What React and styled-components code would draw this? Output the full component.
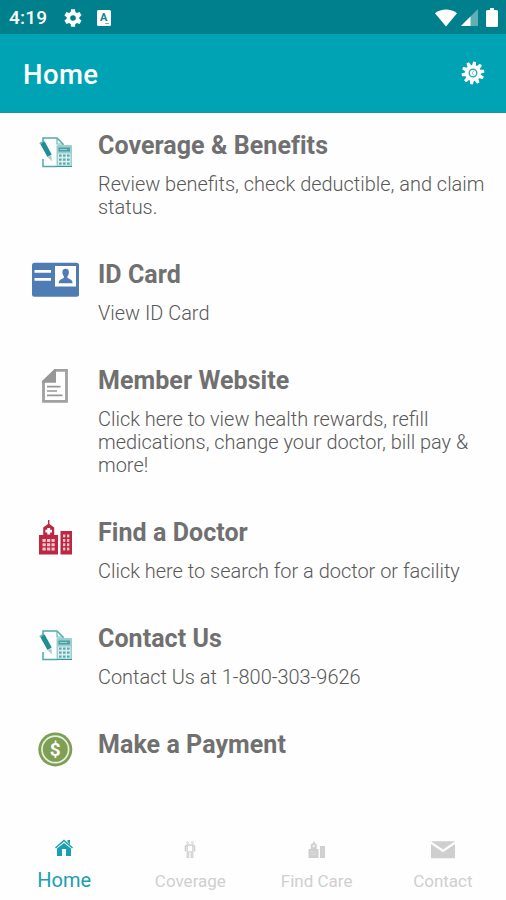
import React from 'react';
import styled, { createGlobalStyle } from 'styled-components';

const GlobalStyle = createGlobalStyle`
  * { box-sizing: border-box; }
  body {
    margin: 0;
    background: #fff;
    font-family: Roboto, "Liberation Sans", sans-serif;
  }
`;

const Screen = styled.div`
  display: flex;
  flex-direction: column;
  height: 900px;
  overflow: hidden;
  background: #fefefe;
`;

const StatusBar = styled.div`
  display: flex;
  align-items: center;
  justify-content: space-between;
  height: 34px;
  padding: 1px 8px 0 9px;
  background: #00808c;
  color: #fff;
`;

const StatusGroup = styled.div`
  display: flex;
  align-items: center;
  gap: ${(p) => p.$gap}px;
`;

const Clock = styled.span`
  font-size: 19px;
  font-weight: 500;
  letter-spacing: 0.2px;
  margin-right: 2px;
`;

const AppBar = styled.header`
  display: flex;
  align-items: center;
  justify-content: space-between;
  height: 79px;
  padding: 0 21px 0 23px;
  background: #00a3b4;
  border-bottom: 1px solid #1796a4;
  color: #fff;
`;

const PageTitle = styled.h1`
  margin: 3px 0 0;
  font-size: 27.5px;
  line-height: 32px;
  font-weight: 500;
  letter-spacing: 0.4px;
`;

const Menu = styled.main`
  flex: 1;
`;

const MenuItem = styled.div`
  display: flex;
  padding: 18px 10px 23px 0;
`;

const IconCell = styled.div`
  flex: 0 0 98px;
  padding: 2px 0 0 31px;
  height: 40px;

  svg { display: block; }
`;

const ItemTitle = styled.h2`
  margin: 0;
  font-size: 25px;
  line-height: 30px;
  font-weight: 700;
  letter-spacing: 0.06px;
  color: #707070;
  white-space: nowrap;
`;

const ItemText = styled.p`
  margin: 12px 0 0;
  font-size: 19.95px;
  line-height: 23px;
  font-weight: 300;
  color: #585858;
  white-space: pre-line;
`;

const BottomNav = styled.nav`
  display: flex;
  height: 76px;
  padding-left: 1px;
`;

const Tab = styled.div`
  flex: 1;
  display: flex;
  flex-direction: column;
  align-items: center;
  color: ${(p) => (p.$active ? '#18a0b0' : '#cfcfcf')};

  svg {
    display: block;
    margin-top: ${(p) => (p.$active ? 13.5 : 16)}px;
    height: 20px;
  }
`;

const TabLabel = styled.span`
  margin-top: ${(p) => (p.$active ? 10.5 : 9)}px;
  font-size: ${(p) => (p.$active ? 20 : 17)}px;
  line-height: 24px;
`;

const teeth = (n) => Array.from({ length: n }, (_, i) => (i * 360) / n);

const StatusGear = () => (
  <svg width="18" height="18" viewBox="0 0 18 18">
    <g fill="#fff">
      {teeth(6).map((a) => (
        <path key={a} d="M6.5 4.5 7 .3h4l.5 4.2z" transform={`rotate(${a} 9 9)`} />
      ))}
    </g>
    <circle cx="9" cy="9" r="4.6" fill="none" stroke="#fff" strokeWidth="3.6" />
  </svg>
);

const LetterBadge = () => (
  <svg width="14" height="16" viewBox="0 0 14 16">
    <rect width="14" height="16" rx="1.5" fill="#fff" />
    <text x="6.8" y="11.4" textAnchor="middle" fontSize="11" fontWeight="700" fill="#16828d">A</text>
    <path d="M8 13.5h4" stroke="#74b3b9" />
  </svg>
);

const Wifi = () => (
  <svg width="22" height="18" viewBox="0 0 22 18">
    <path d="M0 4.2C6.5-.6 15.5-.6 22 4.2L11 17.5z" fill="#fff" />
  </svg>
);

const Signal = () => (
  <svg width="17" height="17" viewBox="0 0 17 17">
    <path d="M17 0v17H0z" fill="#62aeb6" />
    <path d="M9.5 7.5V17H0z" fill="#fff" />
  </svg>
);

const Battery = () => (
  <svg width="12" height="19" viewBox="0 0 12 19">
    <path d="M4 0h4v2h2.5q1.5 0 1.5 1.5v14q0 1.5-1.5 1.5h-9Q0 19 0 17.5v-14Q0 2 1.5 2H4z" fill="#fff" />
  </svg>
);

const SettingsGear = () => (
  <svg width="24" height="24" viewBox="0 0 24 24">
    <g fill="#fff">
      {teeth(10).map((a) => (
        <path key={a} d="M9.9 5 10.6.6h2.8L14.1 5z" transform={`rotate(${a + 8} 12 12)`} />
      ))}
      <circle cx="12" cy="12" r="8" />
    </g>
    <circle cx="12" cy="12" r="3.8" fill="none" stroke="#3aa9b6" strokeWidth="1.4" />
    <path d="M12.8 9.8 11 12l1.8 2.2" fill="none" stroke="#7fc8d0" />
  </svg>
);

const CalculatorIcon = () => (
  <svg width="50" height="36" viewBox="0 0 50 36">
    <path d="M12 14V5h14l6 6v2M12 26v7.500h14" fill="none" stroke="#4dabad" strokeWidth="1.5" />
    <path d="M26 5v6h6" fill="none" stroke="#68b6b8" strokeWidth="1.2" />
    <path d="m9.300 11 4.400-2.500 7 13-4.200 2.500z" fill="#1d8f94" />
    <path d="m8.300 10 4.400-2.600 .7 1.200L9 11.200z" fill="#62aeb0" />
    <path d="m16.700 24.200 3.700-2 .6 6z" fill="#b3c9ca" />
    <rect x="25.5" y="12" width="15.5" height="22" rx="1" fill="#9fcdce" />
    <rect x="27.5" y="14.5" width="11.5" height="4" fill="#46a3a6" />
    <path d="M29 16.500h7" stroke="#b8dddd" strokeWidth=".8" />
    <path d="M27 20.500h12.500v12H27z" fill="#dceeee" />
    <g fill="#54acae">
      {[21.5, 25.5, 29.5].map((y) =>
        [28, 32, 36].map((x) => (
          <rect key={`${x}-${y}`} x={x} y={y} width="2.6" height="2.2" />
        ))
      )}
    </g>
    <path d="M25.500 33.500h15.500" stroke="#2b9a9d" />
  </svg>
);

const IdCardIcon = () => (
  <svg width="50" height="36" viewBox="0 0 50 36">
    <rect x="1" y=".8" width="47" height="34" rx="2.5" fill="#4f7cb3" />
    <path d="M3.500 9.300h16.500M3.500 17.300h16.500" stroke="#fff" strokeWidth="2.7" />
    <rect x="24" y="4" width="21" height="20.5" fill="#fff" />
    <path d="M34.600 6.800c2.200 0 3.500 1.500 3.300 3.800-.1 1.800-.7 2.900-1.500 3.800v1.500c2.300 1 5.200 1.600 5.200 5.300H27.700c0-3.700 2.900-4.300 5.200-5.300v-1.500c-.8-.9-1.400-2-1.500-3.800-.2-2.300 1-3.800 3.200-3.800z" fill="#4f7cb3" />
  </svg>
);

const DocumentIcon = () => (
  <svg width="50" height="36" viewBox="0 0 50 36">
    <path d="M24 2.300h11.500v31H12.500V14" fill="none" stroke="#a0a0a0" strokeWidth="2.8" />
    <path d="M11 14.800V13L23.500 1h1.500v13.800z" fill="#979797" />
    <path d="M16 18.700h13.500M16 23h10M16 27.300h15.500" stroke="#989898" strokeWidth="1.7" />
  </svg>
);

const HospitalIcon = () => (
  <svg width="50" height="36" viewBox="0 0 50 36">
    <g fill="#bd2742">
      <path d="M17 0h1.400v4l4.800 3.500V15H27v19.500H8V15h4.200V7.500L17 4z" />
      <path d="M29.500 11H41v23.500H29.500z" />
    </g>
    <path d="M17.700 8v6.500M14.400 11.200H21" stroke="#fff" strokeWidth="2.8" />
    <g fill="#f3c9d0">
      {[19, 23.3, 27.6].map((y) =>
        [11.5, 16, 20.5].map((x) => (
          <rect key={`${x}-${y}`} x={x} y={y} width="3.2" height="2.9" />
        ))
      )}
      {[14.5, 19, 23.3, 27.6].map((y) =>
        [32, 36].map((x) => (
          <rect key={`${x}-${y}`} x={x} y={y} width="2.3" height="2.8" />
        ))
      )}
    </g>
  </svg>
);

const DollarIcon = () => (
  <svg width="50" height="36" viewBox="0 0 50 36">
    <circle cx="24.3" cy="17.4" r="17" fill="#7f9f55" />
    <circle cx="24.3" cy="17.4" r="13.3" fill="none" stroke="#e9efdf" strokeWidth="1.7" />
    <text x="24.3" y="24" textAnchor="middle" fontSize="19" fontWeight="700" fill="#fff">$</text>
  </svg>
);

const HomeIcon = () => (
  <svg width="18" height="20" viewBox="0 0 18 20">
    <path d="M2 10.500 9 5l7 5.500V18h-5v-7H7v7H2z" fill="currentColor" />
    <path d="M.5 10 9 2.500l8.500 7.500" fill="none" stroke="currentColor" strokeWidth="1.5" />
    <path d="M12.500 2H15v4.500L12.500 4z" fill="currentColor" />
  </svg>
);

const PeopleIcon = () => (
  <svg width="12" height="20" viewBox="0 0 12 20" fill="none" stroke="currentColor">
    <circle cx="3.6" cy="2.6" r=".9" />
    <circle cx="8.4" cy="2.6" r=".9" />
    <path d="M1.500 11.500V6.500Q2 5 3.600 5h4.800q1.600 0 2.100 1.500v5" strokeWidth="1.6" />
    <path d="M3.200 5v12.500h1.500V12q1.300-1 2.600 0v5.500h1.500V5" strokeWidth="1.2" />
  </svg>
);

const CareIcon = () => (
  <svg width="18" height="20" viewBox="0 0 18 20">
    <path d="M5.500 1h1v1.500L8.700 4.500V9H10.500v9H.5V9h2.300V4.500L5.500 2.500zM12 6h5v12h-5z" fill="currentColor" />
    <path d="M5.800 4.500v3M4.300 6h3" stroke="#f2f2f2" />
    <path d="M2.500 12h6M2.500 14.500h6M13.500 9h2M13.500 12h2M13.500 15h2" stroke="#dedede" strokeWidth=".9" />
  </svg>
);

const MailIcon = () => (
  <svg width="24" height="20" viewBox="0 0 24 20">
    <path d="M0 1.300h24L12 9.500zM0 4l12 8.200L24 4v14.300H0z" fill="currentColor" />
  </svg>
);

const items = [
  {
    title: 'Coverage & Benefits',
    text: 'Review benefits, check deductible, and claim\nstatus.',
    Icon: CalculatorIcon,
  },
  { title: 'ID Card', text: 'View ID Card', Icon: IdCardIcon },
  {
    title: 'Member Website',
    text: 'Click here to view health rewards, refill\nmedications, change your doctor, bill pay &\nmore!',
    Icon: DocumentIcon,
  },
  {
    title: 'Find a Doctor',
    text: 'Click here to search for a doctor or facility',
    Icon: HospitalIcon,
  },
  { title: 'Contact Us', text: 'Contact Us at 1-800-303-9626', Icon: CalculatorIcon },
  { title: 'Make a Payment', Icon: DollarIcon },
];

const tabs = [
  { label: 'Home', Icon: HomeIcon, active: true },
  { label: 'Coverage', Icon: PeopleIcon },
  { label: 'Find Care', Icon: CareIcon },
  { label: 'Contact', Icon: MailIcon },
];

const App = () => {
  return (
    <>
      <GlobalStyle />
      <Screen>
        <StatusBar>
          <StatusGroup $gap={15}>
            <Clock>4:19</Clock>
            <StatusGear />
            <LetterBadge />
          </StatusGroup>
          <StatusGroup $gap={4}>
            <Wifi />
            <Signal />
            <span />
            <Battery />
          </StatusGroup>
        </StatusBar>
        <AppBar>
          <PageTitle>Home</PageTitle>
          <SettingsGear />
        </AppBar>
        <Menu>
          {items.map(({ title, text, Icon }) => (
            <MenuItem key={title}>
              <IconCell>
                <Icon />
              </IconCell>
              <div>
                <ItemTitle>{title}</ItemTitle>
                {text && <ItemText>{text}</ItemText>}
              </div>
            </MenuItem>
          ))}
        </Menu>
        <BottomNav>
          {tabs.map(({ label, Icon, active }) => (
            <Tab key={label} $active={active}>
              <Icon />
              <TabLabel $active={active}>{label}</TabLabel>
            </Tab>
          ))}
        </BottomNav>
      </Screen>
    </>
  );
};

export default App;
